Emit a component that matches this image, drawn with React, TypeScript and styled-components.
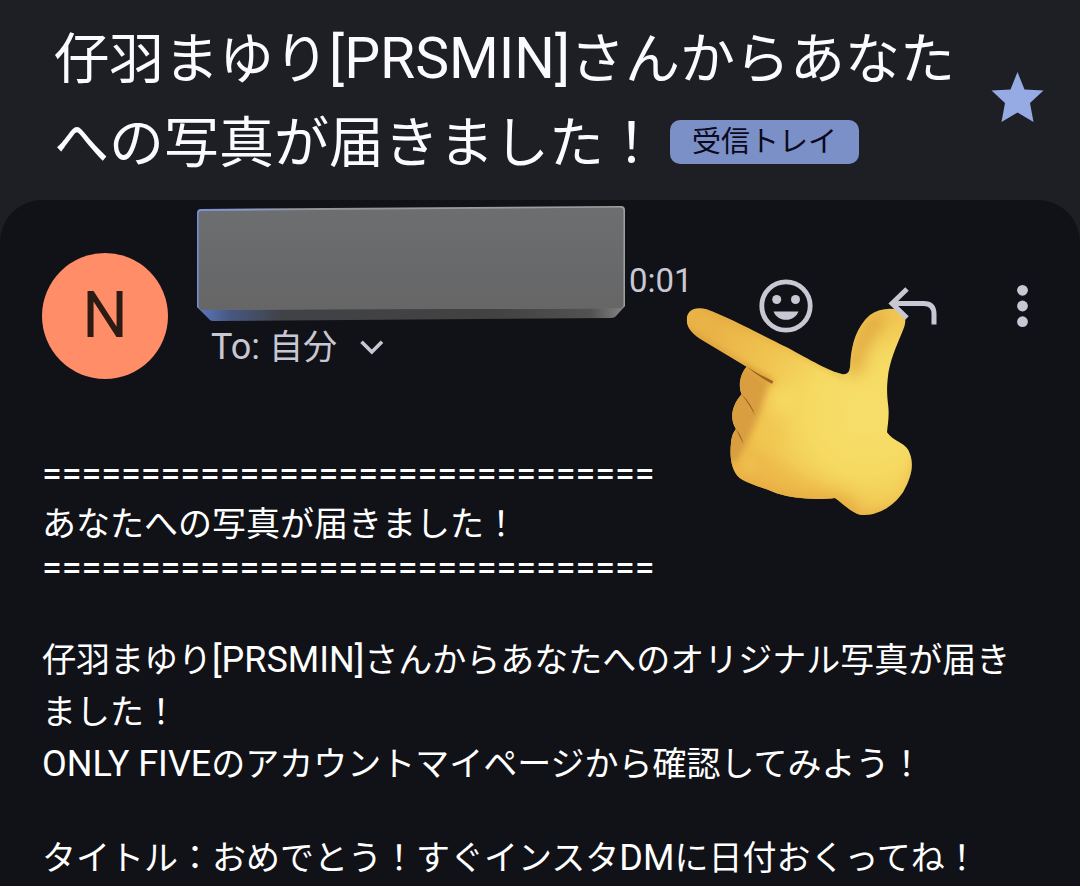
import React from "react";
import styled, { createGlobalStyle } from "styled-components";

const GlobalStyle = createGlobalStyle`
  *, *::before, *::after { box-sizing: border-box; }
  body {
    margin: 0;
    background: #111217;
    font-family: Roboto, "Noto Sans CJK JP", sans-serif;
    -webkit-font-smoothing: antialiased;
  }
`;

const Page = styled.main`
  min-height: 100vh;
  background: #1e1f24;
  display: flex;
  flex-direction: column;
`;

const SubjectBar = styled.header`
  display: flex;
  align-items: center;
  justify-content: space-between;
  gap: 28px;
  padding: 17px 36px 15px 54px;
`;

const Subject = styled.h1`
  margin: 0;
  flex: 1;
  font-size: 55px;
  font-weight: 400;
  line-height: 84px;
  color: #fbfaff;
`;

const SubjectLatin = styled.span`
  font-size: 57px;
  line-height: 1;
`;

const Label = styled.button`
  margin: 0 0 0 11px;
  padding: 0 22px;
  border: 0;
  border-radius: 10px;
  background: #7b90c7;
  color: #0a0a1c;
  font-family: inherit;
  font-size: 29px;
  line-height: 44px;
  vertical-align: 10px;
`;

const IconButton = styled.button<{ $width?: number }>`
  display: flex;
  align-items: center;
  justify-content: center;
  flex: none;
  width: ${(p) => p.$width ?? 64}px;
  height: 64px;
  padding: 0;
  border: 0;
  background: none;
  color: #c8c8d4;
`;

const Card = styled.article`
  position: relative;
  flex: 1;
  padding: 0 42px;
  border-radius: 42px 42px 0 0;
  background: #111217;
`;

const MessageHead = styled.div`
  display: flex;
  align-items: flex-start;
  justify-content: space-between;
  padding-top: 6px;
`;

const Avatar = styled.div`
  flex: none;
  width: 126px;
  height: 126px;
  margin: 47px 29px 0 0;
  border-radius: 50%;
  background: #ff8e68;
  color: #2c1b15;
  font-size: 64px;
  line-height: 126px;
  text-align: center;
`;

const Sender = styled.div`
  flex: 1;
  min-width: 0;
`;

const SenderRow = styled.div`
  display: flex;
  align-items: flex-end;
  gap: 4px;
`;

const Time = styled.time`
  padding-bottom: 20px;
  color: #c8c8d4;
  font-size: 33px;
  line-height: 40px;
`;

const Recipient = styled.button`
  display: flex;
  align-items: center;
  gap: 22px;
  padding: 0 0 0 14px;
  border: 0;
  background: none;
  color: #c8c8d4;
  font-family: inherit;
  font-size: 34px;
  line-height: 52px;
`;

const Latin = styled.span`
  font-size: 36px;
  line-height: 1;
`;

const Actions = styled.div`
  position: relative;
  z-index: 2;
  display: flex;
  gap: 62px;
  padding-top: 68px;
`;

const Body = styled.div`
  padding-top: 77px;
  color: #ffffff;
  font-size: 34px;
`;

const Line = styled.p`
  margin: 0;
  line-height: 52px;
`;

const Rule = styled.p`
  margin: 0;
  padding-bottom: 6px;
  font-size: 36px;
  line-height: 36px;
`;

const Paragraph = styled.div`
  padding-top: 42px;
`;

const HandSticker = styled.svg`
  position: absolute;
  z-index: 1;
  top: 60px;
  right: 130px;
  width: 280px;
  height: 270px;
  pointer-events: none;
`;

const Star = () => (
  <svg width="54" height="60" viewBox="0 0 54 60" aria-hidden="true">
    <path
      d="M27.500 1 L34.500 18.500 L53.500 19.500 L40 32 L43.500 51 L27.500 41.500 L11.500 51 L15 32 L1.500 19.500 L20.500 18.500 Z"
      fill="#96abe3"
    />
  </svg>
);

const Smile = () => (
  <svg width="54" height="54" viewBox="0 0 54 54" aria-hidden="true">
    <circle cx="27" cy="27" r="24.200" fill="none" stroke="currentColor" strokeWidth="4.800" />
    <circle cx="17.700" cy="20.500" r="4.500" fill="currentColor" />
    <circle cx="36.500" cy="20.500" r="4.500" fill="currentColor" />
    <path d="M14.500 32.500 H39.500 C37.500 37.500 33 40.800 27 40.800 S16.500 37.500 14.500 32.500 Z" fill="currentColor" />
  </svg>
);

const Reply = () => (
  <svg width="50" height="40" viewBox="0 0 50 40" fill="none" stroke="currentColor" strokeWidth="5" aria-hidden="true">
    <path d="M20 3 L5 17.500 L20 32" />
    <path d="M5 17.500 H36.500 Q47 17.500 47 28 V38.500" />
  </svg>
);

const More = () => (
  <svg width="12" height="44" viewBox="0 0 12 44" fill="currentColor" aria-hidden="true">
    <circle cx="6.500" cy="6.300" r="5.400" />
    <circle cx="6.500" cy="22" r="5.400" />
    <circle cx="6.500" cy="37.700" r="5.400" />
  </svg>
);

const Chevron = () => (
  <svg width="26" height="16" viewBox="0 0 26 16" fill="none" stroke="currentColor" strokeWidth="3.600" aria-hidden="true">
    <path d="M2.500 2.800 L12.800 13 L23 2.800" />
  </svg>
);

const Slab = styled.svg`
  display: block;
  flex: 0 1 428px;
  min-width: 0;
  height: 115px;
`;

const HiddenName = () => (
  <Slab viewBox="0 0 428 115" preserveAspectRatio="none" aria-hidden="true">
    <defs>
      <linearGradient id="slabFace" x1="0" y1="0" x2="0" y2="1">
        <stop offset="0" stopColor="#6d6e6f" />
        <stop offset=".5" stopColor="#696a6b" />
        <stop offset="1" stopColor="#666667" />
      </linearGradient>
      <linearGradient id="slabEdge" x1="0" y1="0" x2="1" y2="0">
        <stop offset="0" stopColor="#5d78c0" />
        <stop offset=".08" stopColor="#46577f" />
        <stop offset=".2" stopColor="#414246" />
        <stop offset=".7" stopColor="#424242" />
        <stop offset=".92" stopColor="#525252" />
        <stop offset="1" stopColor="#858585" />
      </linearGradient>
      <linearGradient id="slabLight" x1="0" y1="0" x2="1" y2="0">
        <stop offset="0" stopColor="#7690d6" />
        <stop offset=".12" stopColor="#8d9cc6" />
        <stop offset=".25" stopColor="#939496" />
        <stop offset="1" stopColor="#a0a0a0" />
      </linearGradient>
    </defs>
    <path d="M0 101 L13 114 Q14 115 16 115 L414 112 Q418 112 420 109 L428 100 Z" fill="url(#slabEdge)" />
    <path d="M4 3 L424 0 Q428 0 428 4 V100 L424 102 L4 103.500 L0 101 V7 Q0 3 4 3 Z" fill="url(#slabLight)" />
    <path d="M5 5 L423 1.500 Q426.500 1.500 426.500 5 V100 L424 102.300 L4 104 L1.500 101 V8 Q1.500 5 5 5 Z" fill="url(#slabFace)" />
  </Slab>
);

const handOutline =
  "M50 180 C50 150 75 138 110 148 C170 170 270 222 350 262 C420 300 480 335 515 342 C535 345 540 335 541 310 C545 250 560 200 600 165 C625 147 660 142 685 150 C705 158 712 180 700 208 C675 270 665 290 655 340 C650 380 650 400 655 440 C658 470 653 495 651 517 C670 545 700 545 715 570 C735 610 725 650 700 695 C670 740 620 770 570 764 C540 755 525 735 495 714 C440 720 370 717 320 700 C290 685 240 675 210 655 C180 630 180 580 183 550 C185 525 192 515 198 507 C180 480 182 440 215 403 C203 375 212 340 230 320 L100 242 C70 225 50 205 50 180 Z";

const Hand = () => (
  <HandSticker viewBox="0 0 840 810" role="img" aria-label="指さし">
    <defs>
      <clipPath id="handClip">
        <path d={handOutline} />
      </clipPath>
      <radialGradient id="handFill" gradientUnits="userSpaceOnUse" cx="590" cy="460" r="520">
        <stop offset="0" stopColor="#f7df6c" />
        <stop offset=".35" stopColor="#f5d961" />
        <stop offset=".65" stopColor="#f0c350" />
        <stop offset="1" stopColor="#e9b347" />
      </radialGradient>
      <filter id="soft" x="-50%" y="-50%" width="200%" height="200%">
        <feGaussianBlur stdDeviation="22" />
      </filter>
      <filter id="softer" x="-50%" y="-50%" width="200%" height="200%">
        <feGaussianBlur stdDeviation="10" />
      </filter>
    </defs>
    <g clipPath="url(#handClip)">
      <rect width="840" height="810" fill="url(#handFill)" />
      <path d="M280 580 C370 650 480 680 580 720 L520 830 L180 800 L160 560 Z" fill="#ebb346" opacity=".6" filter="url(#soft)" />
      <path d="M215 310 L300 368 L275 440 L255 500 L225 560 L195 610 L160 600 L150 400 Z" fill="#d89e3f" filter="url(#softer)" />
      <path d="M190 665 C280 710 400 740 500 730 L580 790 L730 740 L760 600" fill="none" stroke="#e3a33c" strokeWidth="30" filter="url(#soft)" />
      <path d="M50 210 L110 250 L235 326 L310 368" fill="none" stroke="#dd9e38" strokeWidth="16" filter="url(#softer)" />
      <path d="M550 340 C555 280 580 215 640 165" fill="none" stroke="#dfa33c" strokeWidth="50" opacity=".85" filter="url(#soft)" />
      <path d="M90 142 L340 254 L515 345" fill="none" stroke="#e0a43b" strokeWidth="8" filter="url(#softer)" />
      <ellipse cx="345" cy="420" rx="40" ry="36" fill="#f6da62" filter="url(#soft)" />
      <ellipse cx="295" cy="525" rx="34" ry="34" fill="#f1c651" filter="url(#soft)" />
      <ellipse cx="240" cy="615" rx="26" ry="26" fill="#edbd4e" filter="url(#softer)" />
    </g>
    <path d="M230 320 Q270 345 310 364 L306 371 Q265 350 230 320 Z" fill="#9a6422" />
    <path d="M215 403 Q245 432 255 466 Q238 434 215 403 Z" fill="#9a6422" />
    <path d="M198 507 Q214 526 221 553 Q208 530 198 507 Z" fill="#9a6422" />
  </HandSticker>
);

const divider = "=".repeat(31);

export default function App() {
  return (
    <>
      <GlobalStyle />
      <Page>
        <SubjectBar>
          <Subject>
            仔羽まゆり<SubjectLatin>[PRSMIN]</SubjectLatin>さんからあなたへの写真が届きました！
            <Label type="button">受信トレイ</Label>
          </Subject>
          <IconButton $width={54} type="button" aria-label="スター">
            <Star />
          </IconButton>
        </SubjectBar>
        <Card>
          <MessageHead>
            <Avatar>N</Avatar>
            <Sender>
              <SenderRow>
                <HiddenName />
                <Time>0:01</Time>
              </SenderRow>
              <Recipient type="button">
                <span>
                  <Latin>To: </Latin>自分
                </span>
                <Chevron />
              </Recipient>
            </Sender>
            <Actions>
              <IconButton type="button" aria-label="リアクション">
                <Smile />
              </IconButton>
              <IconButton type="button" aria-label="返信">
                <Reply />
              </IconButton>
              <IconButton $width={32} type="button" aria-label="その他">
                <More />
              </IconButton>
            </Actions>
          </MessageHead>
          <Hand />
          <Body>
            <Rule>{divider}</Rule>
            <Line>あなたへの写真が届きました！</Line>
            <Rule>{divider}</Rule>
            <Paragraph>
              <Line>
                仔羽まゆり<Latin>[PRSMIN]</Latin>さんからあなたへのオリジナル写真が届きました！
              </Line>
              <Line>
                <Latin>ONLY FIVE</Latin>のアカウントマイページから確認してみよう！
              </Line>
            </Paragraph>
            <Paragraph>
              <Line>
                タイトル：おめでとう！すぐインスタ<Latin>DM</Latin>に日付おくってね！
              </Line>
            </Paragraph>
          </Body>
        </Card>
      </Page>
    </>
  );
}
